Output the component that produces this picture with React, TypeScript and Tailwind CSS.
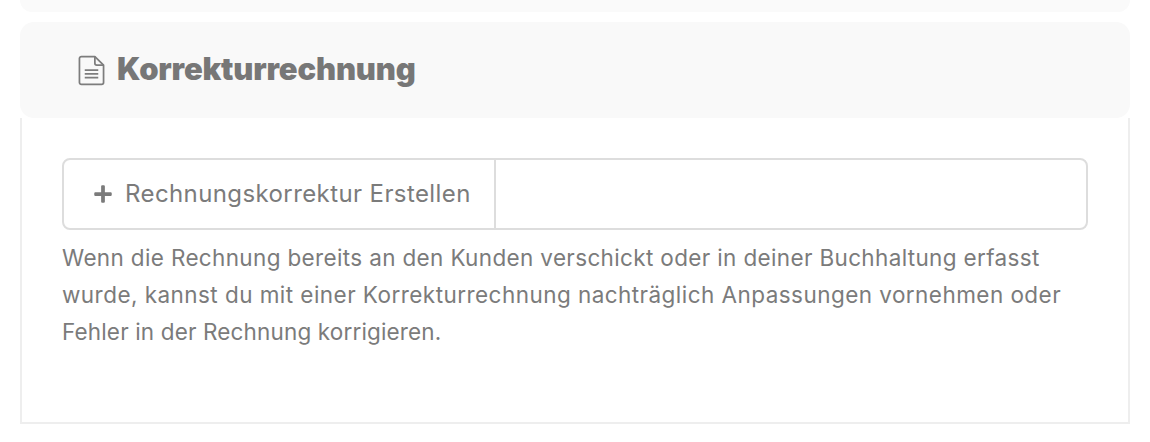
import { FaPlus } from "react-icons/fa";

function DocIcon() {
  return (
    <svg width="27" height="31" viewBox="0 0 28 32" fill="none" stroke="#7d7d7d" strokeWidth="1.8" className="shrink-0">
      <path d="M3.5 1.5h14l9 9v18a2 2 0 0 1-2 2h-21a2 2 0 0 1-2-2v-25a2 2 0 0 1 2-2z" strokeLinejoin="round" />
      <path d="M17.5 1.5v7a2 2 0 0 0 2 2h7" strokeLinejoin="round" />
      <path d="M7 15.5h14M7 19.5h14M7 23.5h14" />
    </svg>
  );
}

export default function App() {
  return (
    <div className="h-[442px] w-[1150px] overflow-hidden bg-white px-5 font-['Inter','Liberation_Sans',sans-serif] text-[#7b7b7b]">
      <div className="h-3 rounded-b-[14px] bg-[#fafafa]" />
      <div className="mt-2.5 flex h-24 items-center gap-[12px] rounded-[14px] bg-[#f9f9f9] pl-[58px]">
        <DocIcon />
        <h2 className="-mt-0.5 text-[31px] font-black tracking-[-0.18px] text-[#777777]">Korrekturrechnung</h2>
      </div>
      <div className="h-[306px] border-2 border-t-0 border-[#eeeeee] px-10 pt-10">
        <div className="flex h-[72px] rounded-lg border-2 border-[#dddddd]">
          <button type="button" className="flex w-[432px] items-center gap-[12px] border-r-2 border-[#dddddd] pl-[29px] text-[24px] text-[#7b7b7b]">
            <FaPlus size={20} className="shrink-0" />
            <span className="tracking-[0.4px]">Rechnungskorrektur Erstellen</span>
          </button>
        </div>
        <p className="mt-[9px] text-[22.5px] leading-[37px]">
          <span className="block tracking-[0.35px]">Wenn die Rechnung bereits an den Kunden verschickt oder in deiner Buchhaltung erfasst</span>
          <span className="block tracking-[0.45px]">wurde, kannst du mit einer Korrekturrechnung nachträglich Anpassungen vornehmen oder</span>
          <span className="block tracking-[0.15px]">Fehler in der Rechnung korrigieren.</span>
        </p>
      </div>
    </div>
  );
}
